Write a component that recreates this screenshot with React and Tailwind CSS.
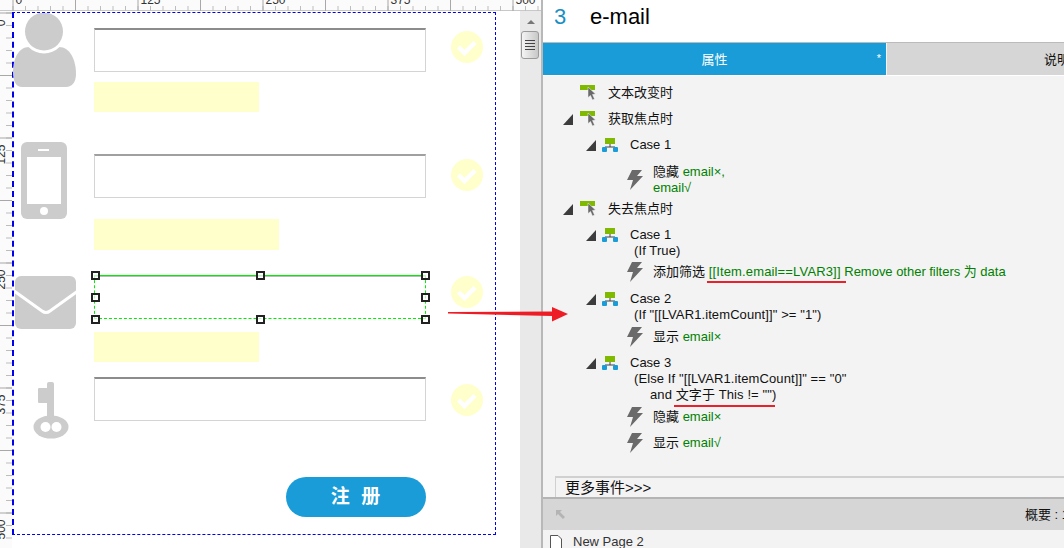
import React from 'react';

const FONT = '"Liberation Sans", "Noto Sans CJK SC", sans-serif';
const MAJORS = [12.5, 75, 137.5, 200, 262.5, 325, 387.5, 450, 512.5];
const SMALLS = Array.from({ length: 44 }, (_, i) => 12.5 + i * 12.5);
const LABELS = [[12.5, '0'], [137.5, '125'], [262.5, '250'], [387.5, '375'], [512.5, '500']];

const TopRuler = () => (
  <svg width="541" height="11" className="block shrink-0" style={{ fontFamily: FONT }}>
    <rect width="541" height="11" fill="#fbfbfb" />
    <rect y="10" width="541" height="1" fill="#c8c8c8" />
    {SMALLS.map((x) => (
      <rect key={x} x={x} y="6" width="1" height="5" fill="#bdbdbd" />
    ))}
    {MAJORS.map((x) => (
      <rect key={x} x={x} y="0" width="1" height="11" fill="#a8a8a8" />
    ))}
    {LABELS.map(([x, t]) => (
      <text key={t} x={x + 3} y="4" fontSize="12" fill="#333">{t}</text>
    ))}
  </svg>
);

const LeftRuler = () => (
  <svg width="12" height="537" className="block shrink-0" style={{ fontFamily: FONT }}>
    <rect width="12" height="537" fill="#fbfbfb" />
    {SMALLS.map((y) => (
      <rect key={y} x="6" y={y - 11} width="6" height="1" fill="#bdbdbd" />
    ))}
    {MAJORS.map((y) => (
      <rect key={y} x="0" y={y - 11} width="12" height="1" fill="#a8a8a8" />
    ))}
    {LABELS.map(([y, t]) => (
      <text key={t} transform={`translate(5 ${y - 11 + 7}) rotate(-90)`} textAnchor="end" fontSize="12" fill="#333">{t}</text>
    ))}
  </svg>
);

const PersonIcon = () => (
  <svg width="64" height="75" viewBox="13 13 64 75" className="absolute left-[1px] top-[2px]">
    <path d="M13 72 C13 58 19 47 29 47 L59 47 C70 47 76 60 76 74 C76 82 72 87 66 87 L22 87 C16 87 13 81 13 72 Z" fill="#cccccc" />
    <circle cx="44" cy="31.5" r="22" fill="#ffffff" />
    <circle cx="44" cy="31.5" r="19" fill="#cccccc" />
  </svg>
);

const PhoneIcon = () => (
  <svg width="46" height="77" viewBox="21 142 46 77" className="absolute left-[9px] top-[131px]">
    <rect x="21" y="142" width="46" height="77" rx="6" fill="#cccccc" />
    <rect x="27" y="157" width="34" height="47" fill="#ffffff" />
    <rect x="38" y="149" width="11" height="2" fill="#ffffff" />
    <circle cx="44" cy="211" r="4" fill="#ffffff" />
  </svg>
);

const MailIcon = () => (
  <svg width="62" height="53" viewBox="15 276 62 53" className="absolute left-[3px] top-[265px]">
    <rect x="15" y="276" width="61" height="53" rx="6" fill="#cccccc" />
    <path d="M14 291 L42 311 Q46 314 50 311 L78 291" fill="none" stroke="#ffffff" strokeWidth="3" />
  </svg>
);

const KeyIcon = () => (
  <svg width="36" height="58" viewBox="33 381 36 58" className="absolute left-[21px] top-[370px]">
    <rect x="47" y="382" width="7" height="38" rx="2" fill="#cccccc" />
    <rect x="38" y="388" width="10" height="15" rx="1" fill="#cccccc" />
    <ellipse cx="51" cy="427" rx="17.5" ry="11.5" fill="#cccccc" />
    <circle cx="45.5" cy="427" r="5" fill="#ffffff" />
    <circle cx="56.5" cy="427" r="5" fill="#ffffff" />
  </svg>
);

const CheckBadge = ({ top }) => (
  <svg width="32" height="32" viewBox="0 0 32 32" className={`absolute left-[439px] ${top}`}>
    <circle cx="16" cy="16" r="16" fill="#ffffcc" />
    <path d="M7.5 16 L13.5 22 L24 11.5" fill="none" stroke="#ffffff" strokeWidth="4.5" />
  </svg>
);

const Handle = ({ className }) => (
  <div className={`absolute w-[9px] h-[9px] bg-white/70 border-2 border-[#222] ${className}`} />
);

const EventIcon = () => (
  <svg width="17" height="16" viewBox="0 0 17 16" className="shrink-0">
    <rect x="0" y="0" width="15" height="5" fill="#7fba00" />
    <path d="M8 2 L15.5 9 L12.5 9.5 L14.5 14 L12.5 15 L10.5 10.5 L8 12.5 Z" fill="#6a6a6a" stroke="#f3f3f3" strokeWidth="0.5" />
  </svg>
);

const CaseIcon = () => (
  <svg width="16" height="14" viewBox="0 0 16 14" className="shrink-0">
    <path d="M8 6 V9 M3 11 V9 H13 V11" fill="none" stroke="#444" strokeWidth="1" />
    <rect x="3" y="0" width="10" height="6" fill="#7fba00" />
    <rect x="0" y="9" width="5" height="5" rx="1" fill="#1a9cd8" />
    <rect x="11" y="9" width="5" height="5" rx="1" fill="#1a9cd8" />
  </svg>
);

const BoltIcon = () => (
  <svg width="16" height="20" viewBox="0 0 16 20" className="shrink-0">
    <path d="M5 0 L15 0 L10 6 L16 6 L3 20 L6 10 L0 10 Z" fill="#6a6a6a" />
  </svg>
);

const Tri = () => (
  <svg width="10" height="11" viewBox="0 0 10 11" className="shrink-0">
    <path d="M0 11 L10 0 V11 Z" fill="#3c3c3c" />
  </svg>
);

const Green = ({ children }) => <span className="text-[#008000]">{children}</span>;

const EventRow = ({ expand, label }) => (
  <div className="flex items-center h-[26px] pl-[20px]">
    <div className="w-[17px] shrink-0">{expand && <Tri />}</div>
    <EventIcon />
    <span className="ml-[11px]">{label}</span>
  </div>
);

const CaseRow = ({ label, className = '' }) => (
  <div className={`flex items-center h-[16px] pl-[43px] ${className}`}>
    <div className="w-[16px] shrink-0"><Tri /></div>
    <CaseIcon />
    <span className="ml-[12px]">{label}</span>
  </div>
);

const Cond = ({ children, indent = 'pl-[91px]' }) => (
  <div className={`h-[16px] leading-[16px] tracking-[0.1px] ${indent} whitespace-nowrap`}>{children}</div>
);

const Action = ({ children, className = 'h-[28px]' }) => (
  <div className={`flex items-center pl-[84px] ${className}`}>
    <BoltIcon />
    <div className="ml-[10px] whitespace-nowrap">{children}</div>
  </div>
);

const App = () => (
  <div className="relative flex w-[1064px] h-[548px] overflow-hidden bg-white text-[13px] text-[#111]" style={{ fontFamily: FONT }}>
    <div className="flex flex-col w-[541px] shrink-0">
      <TopRuler />
      <div className="flex flex-1 min-h-0">
        <LeftRuler />
        <div className="relative flex-1">
          <div className="absolute left-0 top-[1px] w-[484px] h-[523px] border border-dashed border-[#0000ee] border-l-2" />
          <PersonIcon />
          <PhoneIcon />
          <MailIcon />
          <KeyIcon />

          <div className="absolute left-[82px] top-[17px] w-[332px] h-[44px] border border-[#d4d4d4] border-t-2 border-t-[#8c8c8c]" />
          <div className="absolute left-[82px] top-[71px] w-[165px] h-[30px] bg-[#ffffcc]" />
          <div className="absolute left-[82px] top-[143px] w-[332px] h-[44px] border border-[#d4d4d4] border-t-2 border-t-[#a0a0a0]" />
          <div className="absolute left-[82px] top-[208px] w-[185px] h-[31px] bg-[#ffffcc]" />
          <div className="absolute left-[82px] top-[264px] w-[332px] h-[44px] border border-dashed border-[#00ee00] [border-top-style:solid] shadow-[inset_0_1px_0_#bbbbbb]" />
          <div className="absolute left-[82px] top-[321px] w-[165px] h-[30px] bg-[#ffffcc]" />
          <div className="absolute left-[82px] top-[366px] w-[332px] h-[44px] border border-[#d4d4d4] border-t-2 border-t-[#8c8c8c]" />

          <Handle className="left-[79px] top-[260px]" />
          <Handle className="left-[244px] top-[260px]" />
          <Handle className="left-[409px] top-[260px]" />
          <Handle className="left-[79px] top-[282px]" />
          <Handle className="left-[409px] top-[282px]" />
          <Handle className="left-[79px] top-[304px]" />
          <Handle className="left-[244px] top-[304px]" />
          <Handle className="left-[409px] top-[304px]" />

          <CheckBadge top="top-[20px]" />
          <CheckBadge top="top-[148px]" />
          <CheckBadge top="top-[265px]" />
          <CheckBadge top="top-[373px]" />

          <div className="absolute left-[274px] top-[466px] w-[140px] h-[40px] rounded-full bg-[#1a9cd8] flex items-center justify-center text-white text-[19px] font-bold tracking-[3px] pl-[2px]">
            注 册
          </div>
        </div>
        <div className="relative w-[21px] shrink-0 bg-[#e9e9e9]">
          <div className="mx-auto mt-[9px] w-0 h-0 border-x-[4px] border-x-transparent border-b-[4px] border-b-[#777]" />
          <div className="ml-[1px] mt-[7px] w-[18px] h-[28px] rounded-[3px] border border-[#9a9a9a] bg-gradient-to-r from-[#f4f4f4] to-[#c8c8c8] flex flex-col items-center justify-center gap-[2px]">
            <div className="w-[10px] h-[1px] bg-[#444]" />
            <div className="w-[10px] h-[1px] bg-[#444]" />
            <div className="w-[10px] h-[1px] bg-[#444]" />
            <div className="w-[10px] h-[1px] bg-[#444]" />
          </div>
        </div>
      </div>
    </div>

    <div className="flex flex-col flex-1 min-w-0 border-l-2 border-[#b8b8b8] overflow-hidden bg-[#f3f3f3]">
      <div className="flex items-center h-[43px] shrink-0 bg-white pl-[11px] border-b border-[#bbbbbb] pb-[10px] text-[22px]">
        <span className="text-[#1a8fc4] w-[36px]">3</span>
        <span className="text-black">e-mail</span>
      </div>
      <div className="flex h-[33px] shrink-0 border-b border-white">
        <div className="relative flex items-center justify-center w-[343px] shrink-0 pt-[2px] bg-[#1a9cd8] text-white">
          属性
          <span className="absolute right-[5px] top-[7px] text-[11px]">*</span>
        </div>
        <div className="flex items-center justify-center w-[340px] shrink-0 ml-[1px] pt-[2px] bg-[#d6d6d6]">说明</div>
      </div>

      <div className="h-[400px] shrink-0 pt-[4px]">
        <EventRow label="文本改变时" />
        <EventRow expand label="获取焦点时" />
        <div className="mt-[5px]"><CaseRow label="Case 1" /></div>
        <Action className="h-[32px] mt-[11px]">
          <div className="leading-[16px]">隐藏 <Green>email×,</Green></div>
          <div className="leading-[16px]"><Green>email√</Green></div>
        </Action>
        <EventRow expand label="失去焦点时" />
        <CaseRow label="Case 1" className="mt-[5px]" />
        <Cond>(If True)</Cond>
        <Action className="h-[28px] pb-[2px]">
          添加筛选{' '}
          <Green>
            <span className="relative tracking-[0.15px]">
              [[Item.email==LVAR3]]
              <span className="absolute left-[-2px] right-[-5px] top-[17px] h-[2px] bg-[#e8212c]" />
            </span>{' '}
            <span className="tracking-[-0.02px]">Remove other filters 为 data</span>
          </Green>
        </Action>
        <CaseRow label="Case 2" className="mt-[4px]" />
        <Cond>(If "[[LVAR1.itemCount]]" &gt;= "1")</Cond>
        <Action>显示 <Green>email×</Green></Action>
        <CaseRow label="Case 3" className="mt-[4px]" />
        <Cond>(Else If "[[LVAR1.itemCount]]" == "0"</Cond>
        <Cond indent="pl-[107px]">
          and{' '}
          <span className="relative">
            文字于 This != "")
            <span className="absolute left-[-2px] right-[1px] top-[18px] h-[2px] bg-[#e8212c]" />
          </span>
        </Cond>
        <Action>隐藏 <Green>email×</Green></Action>
        <Action className="h-[24px]">显示 <Green>email√</Green></Action>
      </div>

      <div className="h-[21px] shrink-0 ml-[12px] pl-[9px] border-t-2 border-l border-[#d0d0d0] leading-[20px] text-[15px]">更多事件&gt;&gt;&gt;</div>
      <div className="flex items-center h-[33px] shrink-0 border-t-2 border-[#b4b4b4] bg-[#d6d6d6] pl-[12px]">
        <svg width="11" height="11" viewBox="0 0 11 11">
          <path d="M1 1 H7 L5 3 L10 8 L8 10 L3 5 L1 7 Z" fill="#b4b4b4" />
        </svg>
        <span className="ml-auto w-[39px] whitespace-nowrap">概要 : 1</span>
      </div>
      <div className="flex items-center flex-1 min-h-0 pl-[7px] pt-[6px]">
        <svg width="12" height="14" viewBox="0 0 12 14">
          <path d="M0.5 0.5 H8 L11.5 4 V13.5 H0.5 Z" fill="#ffffff" stroke="#555" />
        </svg>
        <span className="ml-[11px] text-[#333]">New Page 2</span>
      </div>
    </div>

    <svg width="124" height="16" viewBox="0 0 124 16" className="absolute left-[447px] top-[306px]">
      <path d="M1 6 L105 5.5 L105 1 L121 8 L105 15.5 L105 10 L1 7.5 Z" fill="#ee1c25" />
    </svg>
  </div>
);

export default App;
